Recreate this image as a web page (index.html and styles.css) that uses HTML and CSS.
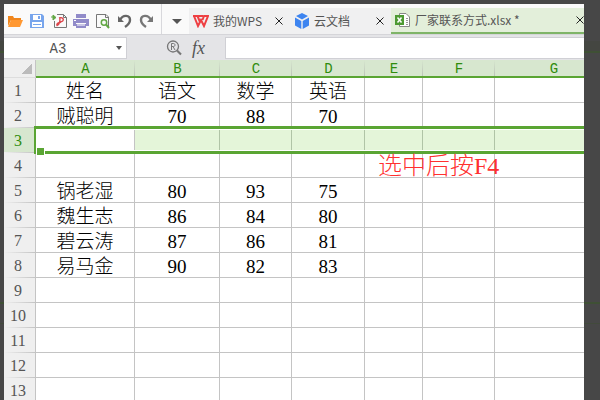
FILE: index.html
```html
<!DOCTYPE html>
<html lang="zh-CN">
<head>
    <meta charset="UTF-8">
    <meta name="viewport" content="width=device-width, initial-scale=1.0">
    <title>厂家联系方式.xlsx</title>
    <link rel="stylesheet" href="styles.css">
</head>
<body>

    <div class="window">
        <header class="topbar">
            <div class="tools">
                <button aria-label="打开">
                    <svg width="16" height="16" viewBox="0 0 16 16">
                        <path d="M1 13V3h5l1 2h7v2H4z" fill="#f0861c"/>
                        <path d="M4 7h12l-3 7H1z" fill="#ff9832"/>
                    </svg>
                </button>
                <button aria-label="保存">
                    <svg width="16" height="16" viewBox="0 0 16 16">
                        <path d="M1 1h12l2 2v12H1z" fill="#78a5ec"/>
                        <path d="M4 2h8v5H4zM3 9h10v5H3z" fill="#fff"/>
                        <path d="M9 3h2v3H9zM4 11h8v1H4z" fill="#78a5ec"/>
                    </svg>
                </button>
                <button aria-label="输出为PDF">
                    <svg width="16" height="16" viewBox="0 0 16 16" fill="none">
                        <path d="M6 1.500h6.500l3 3v10h-12V8" stroke="#777"/>
                        <path d="M12.500 1.500v3h3" stroke="#777"/>
                        <path d="M0 4h3M2 2l3 2.500L2 7z" fill="#62a744" stroke="#62a744"/>
                        <path d="M8 5c5-2 6 4 1 4M9 5c0 5-1 7-3 7.500-1-2 2-3.500 4-3" stroke="#dc454b" stroke-width="1.400"/>
                    </svg>
                </button>
                <button aria-label="打印">
                    <svg width="16" height="16" viewBox="0 0 16 16">
                        <path d="M3 1h10v4H3zM0 6h16v7h-3v-3H3v3H0z" fill="#918bc9"/>
                        <path d="M3 11h10v4H3z" fill="#918bc9"/>
                        <path d="M4 12h8M1 7.500h2" stroke="#fff"/>
                    </svg>
                </button>
                <button aria-label="打印预览">
                    <svg width="16" height="16" viewBox="0 0 16 16" fill="none">
                        <path d="M6 14.500H1.500V1.500H11L13.500 4v10.500" stroke="#777"/>
                        <path d="M10.500 1.500V4.500h3" stroke="#777"/>
                        <circle cx="9" cy="9.500" r="2.700" stroke="#62a744" stroke-width="1.500"/>
                        <path d="M11 11.500l3 3.500" stroke="#62a744" stroke-width="2"/>
                    </svg>
                </button>
                <button aria-label="撤销">
                    <svg width="16" height="16" viewBox="0 0 16 16">
                        <path d="M1 3v6h6z" fill="#666"/>
                        <path d="M3 7c3-6 10-5 10 0 0 3-2 5-5 7" fill="none" stroke="#666" stroke-width="2.400"/>
                    </svg>
                </button>
                <button aria-label="恢复">
                    <svg width="16" height="16" viewBox="0 0 16 16">
                        <path d="M14 3v6H8z" fill="#777"/>
                        <path d="M12 7C9 1 2 2 2 7c0 3 2 5 5 7" fill="none" stroke="#777" stroke-width="2.400"/>
                    </svg>
                </button>
            </div>
            <button class="more" aria-label="更多"><span class="caret"></span></button>
            <nav class="tabs">
                <div class="tab">
                    <svg width="16" height="14" viewBox="0 0 16 14" fill="none" stroke="#ee3f42" stroke-width="2">
                        <path d="M0 2h10M1 2l4 10 3-6 3 6 4-10h-4L9.500 6M4.500 2L7 8"/>
                    </svg>
                    <button class="name">我的WPS</button>
                    <button class="close" aria-label="关闭"><svg width="8" height="8"><path d="M.5 .5l7 7M7.500 .5l-7 7" stroke="#222"/></svg></button>
                </div>
                <div class="tab">
                    <svg width="16" height="16" viewBox="0 0 16 16" fill="#3d84f0">
                        <path d="M8 0l6 3-6 3.500L2 3zM1 4.500l6.300 3.600V16L1 12.500zM15 4.500L8.700 8.100V16l6.300-3.500z"/>
                    </svg>
                    <button class="name">云文档</button>
                    <button class="close" aria-label="关闭"><svg width="8" height="8"><path d="M.5 .5l7 7M7.500 .5l-7 7" stroke="#222"/></svg></button>
                </div>
                <div class="tab active">
                    <svg width="16" height="16" viewBox="0 0 16 16">
                        <path d="M4.500 1.500H11l3.500 3.500v9.500h-10z" fill="#fff" stroke="#888"/>
                        <path d="M11 6.500h2M11 8.500h2M11 10.500h2M11 12.500h2" stroke="#999"/>
                        <path d="M0 3h9v10H0z" fill="#4d9a33"/>
                        <path d="M2.500 5.500l4 5M6.500 5.500l-4 5" stroke="#fff" stroke-width="1.500"/>
                    </svg>
                    <button class="name">厂家联系方式.xlsx *</button>
                    <button class="close" aria-label="关闭"><svg width="8" height="8"><path d="M.5 .5l7 7M7.500 .5l-7 7" stroke="#222"/></svg></button>
                </div>
            </nav>
        </header>

        <div class="formula-bar">
            <div class="name-box">
                <input type="text" value="A3" aria-label="名称框">
                <button aria-label="选择名称"><span class="caret small"></span></button>
            </div>
            <div class="fx">
                <button aria-label="查找">
                    <svg width="16" height="16" viewBox="0 0 16 16" fill="none" stroke="#777">
                        <circle cx="7" cy="6.500" r="5.500" stroke-width="1.300"/>
                        <path d="M11 10.500l4 4" stroke-width="2.200"/>
                        <path d="M5.500 10V3.500h2c2 0 2 3 0 3h-2M7 6.500L9 10"/>
                    </svg>
                </button>
                <button class="fn" aria-label="插入函数">fx</button>
            </div>
            <input class="formula" type="text" aria-label="编辑栏">
        </div>

        <main class="sheet">
            <table>
                <colgroup>
                    <col class="col-num"><col class="col-a"><col class="col-b"><col class="col-c">
                    <col class="col-d"><col class="col-e"><col class="col-f"><col class="col-g">
                </colgroup>
                <thead>
                    <tr><th class="corner"></th><th>A</th><th>B</th><th>C</th><th>D</th><th>E</th><th>F</th><th>G</th></tr>
                </thead>
                <tbody>
                    <tr><th>1</th><td>姓名</td><td>语文</td><td>数学</td><td>英语</td><td></td><td></td><td></td></tr>
                    <tr><th>2</th><td>贼聪明</td><td>70</td><td>88</td><td>70</td><td></td><td></td><td></td></tr>
                    <tr class="selected"><th>3<span class="outline"></span></th><td></td><td></td><td></td><td></td><td></td><td></td><td></td></tr>
                    <tr><th>4</th><td></td><td></td><td></td><td></td><td class="has-note"><span class="note">选中后按F4</span></td><td></td><td></td></tr>
                    <tr><th>5</th><td>锅老湿</td><td>80</td><td>93</td><td>75</td><td></td><td></td><td></td></tr>
                    <tr><th>6</th><td>魏生志</td><td>86</td><td>84</td><td>80</td><td></td><td></td><td></td></tr>
                    <tr><th>7</th><td>碧云涛</td><td>87</td><td>86</td><td>81</td><td></td><td></td><td></td></tr>
                    <tr><th>8</th><td>易马金</td><td>90</td><td>82</td><td>83</td><td></td><td></td><td></td></tr>
                    <tr><th>9</th><td></td><td></td><td></td><td></td><td></td><td></td><td></td></tr>
                    <tr><th>10</th><td></td><td></td><td></td><td></td><td></td><td></td><td></td></tr>
                    <tr><th>11</th><td></td><td></td><td></td><td></td><td></td><td></td><td></td></tr>
                    <tr><th>12</th><td></td><td></td><td></td><td></td><td></td><td></td><td></td></tr>
                    <tr><th>13</th><td></td><td></td><td></td><td></td><td></td><td></td><td></td></tr>
                </tbody>
            </table>
        </main>
    </div>

</body>
</html>
```

FILE: styles.css
```css
* {
    margin: 0;
    padding: 0;
    box-sizing: border-box;
}

/* dimmed sheet showing faintly behind the window */
body {
    height: 100vh;
    padding: 4px 16px 0 4px;
    overflow: hidden;
    background:
        linear-gradient(#3f5035, #3f5035) 0 51px / 100% 2px no-repeat,
        linear-gradient(#444641, #444641) 0 41px / 100% 10px no-repeat,
        linear-gradient(#3f5035, #3f5035) 0 302px / 100% 2px no-repeat,
        linear-gradient(#424a3c, #424a3c) 0 323px / 100% 1px no-repeat,
        #474747;
    font-family: "Noto Sans CJK SC", sans-serif;
}

button {
    border: none;
    background: none;
    color: inherit;
    font: inherit;
    cursor: pointer;
}

input {
    border: none;
    outline: none;
}

svg {
    display: block;
    flex: none;
}

.window {
    height: 100%;
    display: flex;
    flex-direction: column;
    overflow: hidden;
    background: #fff;
}

/* quick tools and document tabs */
.topbar {
    display: flex;
    height: 30px;
    flex: none;
    background: #fafafa;
}

.tools {
    display: flex;
    flex: none;
    padding-right: 3px;
    border-right: 1px solid #d8d8dc;
}

.tools button {
    display: flex;
    align-items: center;
    justify-content: center;
    width: 22px;
    padding-top: 4px;
}

.more {
    flex: none;
    width: 27px;
    padding: 4px 0 0 2px;
}

.caret {
    display: block;
    width: 0;
    margin: 0 auto;
    border: 5px solid transparent;
    border-top-color: #555;
    border-bottom: none;
}

.caret.small {
    border-width: 3px;
    border-top-width: 4px;
    border-bottom: none;
}

.tabs {
    display: flex;
    flex: 1;
    min-width: 0;
    margin-top: 4px;
    background: #f0f0f1;
}

.tab {
    display: flex;
    align-items: center;
    flex: none;
    width: 101px;
    padding: 0 7px 1px 4px;
    gap: 4px;
    color: #555;
    font-size: 12px;
}

.tab .name {
    white-space: nowrap;
    line-height: 20px;
}

.tab .close {
    margin-left: auto;
}

.tab.active {
    flex: 1;
    padding: 0 0 0 4px;
    border-bottom: 2px solid #7fb468;
    background: #e3efda;
}

/* name box and formula input */
.formula-bar {
    display: flex;
    flex: none;
    height: 26px;
    padding: 2px 0;
    border-top: 1px solid #d5d5d9;
    background: #e4e4e7;
}

.name-box {
    display: flex;
    flex: none;
    width: 123px;
    height: 22px;
    border: 1px solid #d0d0d5;
    border-left: none;
    background: #fff;
}

.name-box input {
    width: 108px;
    padding-top: 1px;
    color: #555;
    font: 14px "Liberation Mono", monospace;
    text-align: center;
}

.name-box button {
    width: 14px;
}

.fx {
    display: flex;
    align-items: center;
    justify-content: flex-end;
    flex: none;
    width: 98px;
    padding: 0 20px 0 0;
    gap: 10px;
}

.fn {
    color: #555;
    font: italic 18px/18px "Liberation Serif", serif;
}

.formula {
    flex: 1;
    min-width: 0;
    height: 22px;
    border: 1px solid #d0d0d5;
    border-right: none;
    background: #fff;
}

/* cells */
.sheet {
    flex: 1;
    overflow: hidden;
}

table {
    width: 609px;
    min-width: 100%;
    table-layout: fixed;
    border-collapse: separate;
    border-spacing: 0;
}

.col-num { width: 32px; }
.col-a { width: 99px; }
.col-b { width: 85px; }
.col-c { width: 72px; }
.col-d { width: 73px; }
.col-e { width: 58px; }
.col-f { width: 72px; }

th {
    color: #555;
    font-weight: normal;
    text-align: center;
}

thead th {
    height: 18px;
    padding-top: 2px;
    border-bottom: 2px solid #5aa533;
    background: linear-gradient(#d7e7cf, #bcc4b8) right / 1px 100% no-repeat #d7e7cf;
    color: #2f8c0c;
    font: 14px/14px "Liberation Mono", monospace;
}

thead .corner {
    border-right: 1px solid #c4c4c4;
    border-bottom: 1px solid #ddd;
    background: linear-gradient(135deg, transparent 50%, #bbb 50%) 18px 4px / 10px 10px no-repeat #efefef;
}

tbody th {
    position: relative;
    height: 25px;
    padding: 1px 3px 0 0;
    border-right: 1px solid #c4c4c4;
    background: linear-gradient(90deg, #efefef, #c4c4c4) bottom / 100% 1px no-repeat #efefef;
    font: 16px/24px "Liberation Serif", serif;
}

td {
    height: 25px;
    padding-top: 3px;
    border-right: 1px solid #c4c4c4;
    border-bottom: 1px solid #c4c4c4;
    color: #000;
    font: 300 19px/21px "Liberation Serif", "Noto Sans CJK SC", serif;
    text-align: center;
    white-space: nowrap;
}

.selected th {
    background-color: #d7e7cf;
    color: #2f8c0c;
}

.selected td {
    border-right-color: #b0c4a6;
    background: #e4f5d9;
}

.selected td:nth-child(2) {
    border-right-color: #c4c4c4;
    background: #fff;
}

/* frame round the whole selected row, starting at its number cell */
.outline {
    position: absolute;
    z-index: 1;
    top: -2px;
    left: 30px;
    width: 100vw;
    height: 28px;
    border: 3px solid #5aa533;
    border-left-width: 2px;
    box-shadow: inset 0 0 0 1px #fff;
}

.outline::after {
    content: "";
    position: absolute;
    left: 0;
    bottom: -5px;
    width: 7px;
    height: 7px;
    border: 1px solid #fff;
    background: #5aa533;
}

.has-note {
    position: relative;
}

.note {
    position: absolute;
    z-index: 2;
    top: 3px;
    left: 13px;
    color: #ff3030;
    font-size: 24px;
}
```
